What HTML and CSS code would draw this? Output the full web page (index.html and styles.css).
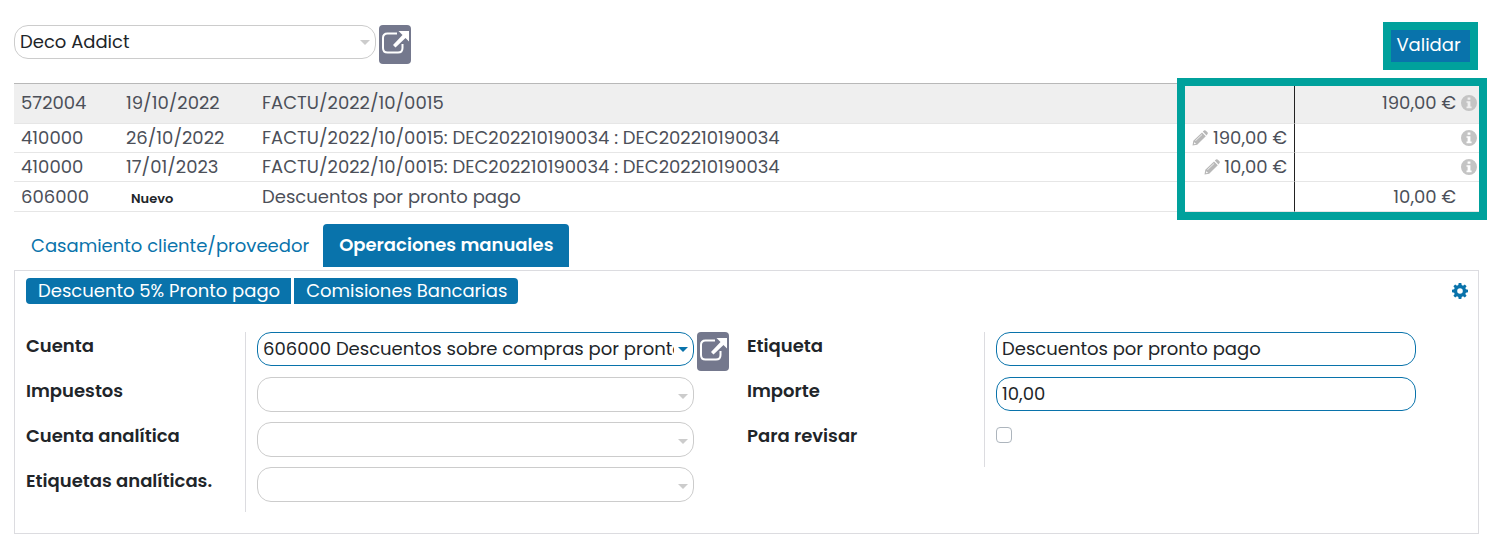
FILE: index.html
```html
<!DOCTYPE html>
<html lang="es">
<head>
<meta charset="utf-8">
<meta name="viewport" content="width=device-width, initial-scale=1">
<title>Conciliación</title>
<link rel="stylesheet" href="styles.css">
</head>
<body>
<svg class="sprite" aria-hidden="true">
  <symbol id="external" viewBox="0 0 32 39">
    <path d="M18 8.500H8.500Q4 8.500 4 13V23Q4 27.500 8.500 27.500H19Q23.500 27.500 23.500 23V19" fill="none" stroke="currentColor" stroke-width="2"/>
    <path d="M19.500 6H30V16.500L26.500 13L16.500 22.500L14 20L23.500 10Z" fill="currentColor"/>
  </symbol>
  <symbol id="pencil" viewBox="0 0 16 16">
    <path fill-rule="evenodd" fill="currentColor" d="M.5 15.500L1.300 10.800L10 2.400L13.800 6.200L5.200 14.700ZM2.300 12.200L1.900 13.600L2.600 14.200L4 13.800ZM3.600 10.900L10.200 4.700L9.900 4.300L3.300 10.500ZM10.800 1.600L12 .6Q13 0 13.900 .7L15.500 2.300Q16.200 3.200 15.500 4.100L14.500 5.400Z"/>
  </symbol>
  <symbol id="info" viewBox="0 0 16 16">
    <path fill-rule="evenodd" fill="currentColor" d="M8 0A8 8 0 1 1 8 16A8 8 0 1 1 8 0ZM6.600 2.500V4.800H9.400V2.500ZM5.500 6.200V7.800H6.600V11.500H5.500V13.200H10.600V11.500H9.400V6.200Z"/>
  </symbol>
  <symbol id="gear" viewBox="0 0 16 16">
    <path fill-rule="evenodd" fill="currentColor" d="M6.700 0H9.300L9.700 2.100L11 2.700L12.800 1.400L14.600 3.200L13.300 5L13.900 6.300L16 6.700V9.300L13.900 9.700L13.300 11L14.600 12.800L12.800 14.600L11 13.300L9.700 13.900L9.300 16H6.700L6.300 13.900L5 13.300L3.200 14.600L1.400 12.800L2.700 11L2.100 9.700L0 9.300V6.700L2.100 6.300L2.700 5L1.400 3.200L3.200 1.400L5 2.700L6.300 2.100ZM8 5.200A2.800 2.800 0 1 0 8 10.800A2.800 2.800 0 1 0 8 5.200Z"/>
  </symbol>
</svg>
<main class="page">
  <header class="topbar">
    <div class="partner">
      <span class="combo"><select class="field" aria-label="Empresa"><option>Deco Addict</option></select></span>
      <button class="external" type="button" aria-label="Abrir empresa"><svg><use href="#external"/></svg></button>
    </div>
    <button class="validate" type="button">Validar</button>
  </header>

  <section class="lines">
    <table class="entries">
      <colgroup><col class="c-code"><col class="c-date"><col><col class="c-debit"><col class="c-credit"><col class="c-info"></colgroup>
      <thead>
        <tr><td>572004</td><td>19/10/2022</td><td>FACTU/2022/10/0015</td><td class="debit"></td><td class="amount">190,00 €</td><td class="info"><svg class="icon"><use href="#info"/></svg></td></tr>
      </thead>
      <tbody>
        <tr><td>410000</td><td>26/10/2022</td><td>FACTU/2022/10/0015: DEC202210190034 : DEC202210190034</td><td class="debit"><svg class="icon"><use href="#pencil"/></svg> 190,00 €</td><td></td><td class="info"><svg class="icon"><use href="#info"/></svg></td></tr>
        <tr><td>410000</td><td>17/01/2023</td><td>FACTU/2022/10/0015: DEC202210190034 : DEC202210190034</td><td class="debit"><svg class="icon"><use href="#pencil"/></svg> 10,00 €</td><td></td><td class="info"><svg class="icon"><use href="#info"/></svg></td></tr>
        <tr><td>606000</td><td><span class="new">Nuevo</span></td><td>Descuentos por pronto pago</td><td class="debit"></td><td class="amount">10,00 €</td><td></td></tr>
      </tbody>
    </table>
    <div class="highlight"></div>
  </section>

  <nav class="tabs">
    <a class="tab" href="#match">Casamiento cliente/proveedor</a>
    <a class="tab active" href="#manual">Operaciones manuales</a>
  </nav>

  <section class="panel" id="manual">
    <div class="toolbar">
      <div class="models">
        <button class="model" type="button">Descuento 5% Pronto pago</button>
        <button class="model" type="button">Comisiones Bancarias</button>
      </div>
      <button class="settings" type="button" aria-label="Configuración"><svg class="icon"><use href="#gear"/></svg></button>
    </div>
    <form class="form">
      <div class="group left">
        <div class="row"><label for="account">Cuenta</label><div class="cell"><span class="combo required"><select class="field" id="account"><option>606000 Descuentos sobre compras por pronto pago</option></select></span><button class="external" type="button" aria-label="Abrir cuenta"><svg><use href="#external"/></svg></button></div></div>
        <div class="row"><label for="taxes">Impuestos</label><div class="cell"><span class="combo empty"><select class="field" id="taxes"><option></option></select></span></div></div>
        <div class="row"><label for="analytic">Cuenta analítica</label><div class="cell"><span class="combo empty"><select class="field" id="analytic"><option></option></select></span></div></div>
        <div class="row"><label for="tags">Etiquetas analíticas.</label><div class="cell"><span class="combo empty"><select class="field" id="tags"><option></option></select></span></div></div>
      </div>
      <div class="group right">
        <div class="row"><label for="name">Etiqueta</label><div class="cell"><input class="field text" id="name" type="text" value="Descuentos por pronto pago"></div></div>
        <div class="row"><label for="amount">Importe</label><div class="cell"><input class="field text" id="amount" type="text" value="10,00"></div></div>
        <div class="row"><label for="check">Para revisar</label><div class="cell"><input class="check" id="check" type="checkbox"></div></div>
      </div>
    </form>
  </section>
</main>
</body>
</html>
```
FILE: styles.css
```css
* { box-sizing: border-box; }

body {
  margin: 0;
  background: #fff;
  color: #4c5059;
  font: 18px/26px Poppins, Inter, sans-serif;
}

button, input, select { font: inherit; margin: 0; }
button { cursor: pointer; border: 0; padding: 0; }

.sprite { position: absolute; width: 0; height: 0; }
.icon { width: 16px; height: 16px; vertical-align: -2px; }

.page { padding: 22px 22px 10px 14px; }

.topbar {
  display: flex;
  justify-content: space-between;
  align-items: flex-start;
  padding-right: 1px;
  padding-bottom: 13px;
}

.partner { display: flex; gap: 3px; width: 397px; padding-top: 3px; }

.validate {
  background: #0973ab;
  border: 8px solid #00a19c;
  color: #fff;
  width: 95px;
  height: 48px;
  padding: 0 4px 2px 0;
}

.combo { position: relative; flex: 1; min-width: 0; }
.combo::after {
  content: "";
  position: absolute;
  right: 6px;
  top: 15px;
  width: 10px;
  height: 5px;
  background: #ccc;
  clip-path: polygon(0 0, 100% 0, 50% 100%);
  pointer-events: none;
}

.field {
  display: block;
  width: 100%;
  height: 34px;
  appearance: none;
  background: #fff;
  border: 1px solid #ccc;
  border-radius: 14px;
  color: #212529;
  outline: 0;
  padding: 0 19px 0 5px;
}
.required .field, .text { border-color: #0973ab; }
.required::after { background: #0973ab; }
.empty .field { height: 35px; }
.empty::after { top: 17px; }

.external {
  width: 32px;
  height: 39px;
  flex: none;
  background: #74788d;
  border-radius: 4px;
  color: #fff;
}
.external svg { display: block; width: 32px; height: 39px; }

.lines { position: relative; }
.highlight {
  position: absolute;
  top: -5px;
  right: -8px;
  bottom: -8px;
  width: 310px;
  border: 8px solid #00a19c;
  pointer-events: none;
}

.entries {
  width: 100%;
  table-layout: fixed;
  border-collapse: separate;
  border-spacing: 0;
  border-top: 1px solid #b8b8b8;
}
.c-code { width: 105px; }
.c-date { width: 136px; }
.c-debit { width: 118px; }
.c-credit { width: 161px; }
.c-info { width: 23px; }

.entries td {
  padding: 1px 0 1px 7px;
  border-bottom: 1px solid #e6e6e6;
  white-space: nowrap;
}
.entries thead td { background: #efefef; padding-top: 6px; padding-bottom: 7px; }
.entries tbody tr:last-child td { padding-top: 2px; }
.entries .debit { border-right: 1px solid #222; padding-right: 7px; text-align: right; }
.entries .amount { text-align: right; }
.entries .info { padding-left: 5px; }
.debit .icon, .info .icon { color: #c4c4c4; }
.debit .icon { color: #b8b8b8; }
.new { color: #212529; font-size: 13px; font-weight: 600; line-height: 13px; padding-left: 5px; }

.tabs { display: flex; padding-top: 12px; }
.tab {
  height: 43px;
  padding: 9px 14px 9px 17px;
  color: #0973ab;
  text-decoration: none;
}
.tab.active {
  background: #0973ab;
  border-radius: 4px 4px 0 0;
  color: #fff;
  font-weight: 600;
  padding: 8px 16px;
}

.panel {
  margin-top: 3px;
  border: 1px solid #dcdce0;
  padding: 7px 10px 21px 11px;
}
.toolbar { display: flex; justify-content: space-between; align-items: center; }
.models { display: flex; gap: 3px; }
.model { background: #0973ab; color: #fff; padding: 0 11px 0 12px; height: 26px; }
.model:first-child { border-radius: 4px 0 0 4px; }
.model:last-child { border-radius: 0 4px 4px 0; }
.settings { background: none; color: #0973ab; height: 26px; }
.settings .icon { display: block; }

.form { display: grid; grid-template-columns: 1fr 1fr; align-items: start; padding-top: 28px; }
.row { display: grid; grid-template-columns: 219px 1fr; height: 45px; }
.right .row { grid-template-columns: 237px 1fr; }
.left { padding-right: 18px; }
.right { padding-right: 52px; }
.row label { color: #212529; font-weight: 600; line-height: 28px; }
.cell {
  display: flex;
  align-items: flex-start;
  gap: 3px;
  min-width: 0;
  border-left: 1px solid #dcdce0;
  padding-left: 11px;
}
.cell .empty { margin-right: 35px; }

.check {
  appearance: none;
  width: 16px;
  height: 16px;
  margin-top: 5px;
  background: #fff;
  border: 1px solid #adb5bd;
  border-radius: 4px;
}
.text { padding-bottom: 1px; }
```
